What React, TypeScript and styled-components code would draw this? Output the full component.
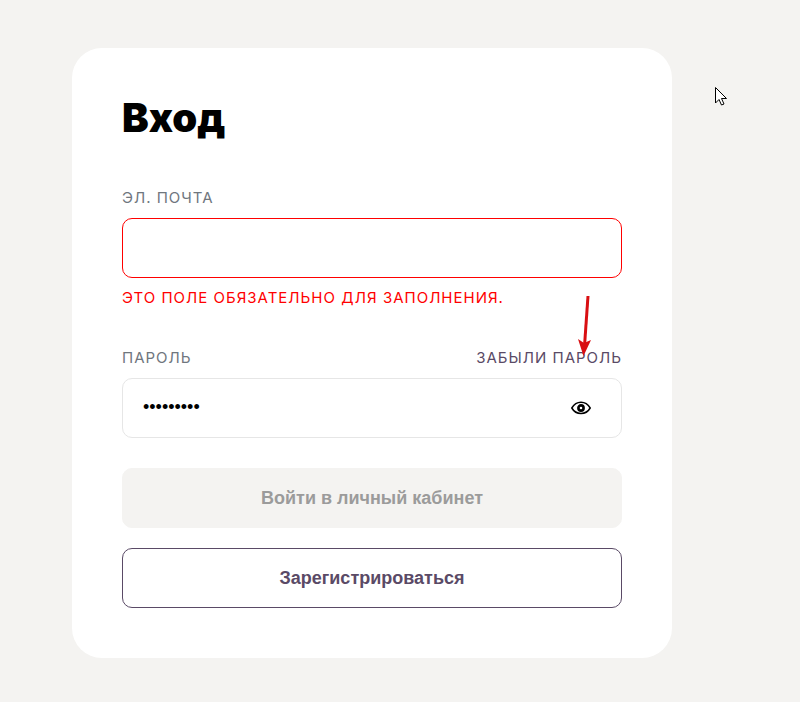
import React, { useState } from 'react';
import styled, { createGlobalStyle } from 'styled-components';

const GlobalStyle = createGlobalStyle`
  * { box-sizing: border-box; }
  body { margin: 0; background: #f4f3f1; font-family: Inter, "Liberation Sans", sans-serif; }
`;

const Page = styled.main`
  position: relative;
  min-height: 100vh;
  padding: 48px 128px 44px 72px;
  background: #f4f3f1;
`;

const Card = styled.form`
  display: flex;
  flex-direction: column;
  max-width: 600px;
  padding: 50px;
  border-radius: 30px;
  background: #fff;
`;

const Title = styled.h1`
  margin: 0 0 50px;
  font: 900 40px/40px Inter, sans-serif;
  color: #000;
`;

const Field = styled.div`
  display: flex;
  flex-direction: column;
`;

const LabelRow = styled.div`
  display: flex;
  justify-content: space-between;
  margin-bottom: 10px;
  font-size: 15px;
  line-height: 20px;
  letter-spacing: 1px;
`;

const Label = styled.label`
  color: #6f767e;
  text-transform: uppercase;
`;

const ForgotLink = styled.a`
  position: relative;
  color: #5a4a66;
  text-decoration: none;
  text-transform: uppercase;
`;

const InputBox = styled.div<{ $invalid?: boolean }>`
  display: flex;
  align-items: center;
  height: 60px;
  padding: 0 20px;
  border: 1px solid ${(p) => (p.$invalid ? '#f00' : '#e6e6e6')};
  border-radius: 10px;
  background: #fff;
`;

const Input = styled.input`
  flex: 1;
  min-width: 0;
  height: 40px;
  padding: 0 0 2px;
  border: 0;
  outline: 0;
  background: transparent;
  font: 18px/24px "Liberation Sans", sans-serif;
  color: #000;
`;

const ErrorText = styled.p`
  margin: 10px 0 40px;
  font-size: 15px;
  line-height: 20px;
  letter-spacing: 1px;
  color: #f00;
  text-transform: uppercase;
`;

const EyeButton = styled.button`
  display: flex;
  margin-right: 10px;
  padding: 0;
  border: 0;
  background: none;
  cursor: pointer;
`;

const Button = styled.button<{ $outline?: boolean }>`
  height: 60px;
  margin-top: ${(p) => (p.$outline ? 20 : 30)}px;
  border: 1px solid ${(p) => (p.$outline ? '#5a4a66' : '#f4f3f1')};
  border-radius: 10px;
  background: ${(p) => (p.$outline ? '#fff' : '#f4f3f1')};
  color: ${(p) => (p.$outline ? '#5a4a66' : '#9b9b9b')};
  font: bold 18px/24px "Liberation Sans", sans-serif;
`;

const Arrow = styled.svg`
  position: absolute;
  right: 30px;
  bottom: 10px;
  pointer-events: none;
`;

const Cursor = styled.svg`
  position: absolute;
  top: 86px;
  left: 714px;
  pointer-events: none;
`;

export default function App() {
  const [email, setEmail] = useState('');
  const [password, setPassword] = useState('password1');
  const [visible, setVisible] = useState(false);

  return (
    <Page>
      <GlobalStyle />
      <Card onSubmit={(e) => e.preventDefault()} noValidate>
        <Title>Вход</Title>
        <Field>
          <LabelRow><Label htmlFor="email">Эл. почта</Label></LabelRow>
          <InputBox $invalid>
            <Input id="email" type="email" value={email} onChange={(e) => setEmail(e.target.value)} aria-invalid="true" aria-describedby="email-error" />
          </InputBox>
          <ErrorText id="email-error">Это поле обязательно для заполнения.</ErrorText>
        </Field>
        <Field>
          <LabelRow>
            <Label htmlFor="password">Пароль</Label>
            <ForgotLink href="#reset">
              Забыли пароль
              <Arrow width="14" height="62" viewBox="0 0 14 62" aria-hidden="true">
                <path d="M10 0 6.500 50" stroke="#d90f12" strokeWidth="3" fill="none" />
                <path d="M0 43 6 47 13 44 5.500 60Z" fill="#d90f12" />
              </Arrow>
            </ForgotLink>
          </LabelRow>
          <InputBox>
            <Input id="password" type={visible ? 'text' : 'password'} value={password} onChange={(e) => setPassword(e.target.value)} />
            <EyeButton type="button" aria-label="Показать пароль" onClick={() => setVisible(!visible)}>
              <svg width="20" height="14" viewBox="0 0 20 14" fill="none" stroke="#000">
                <path d="M.8 7C3 3.200 6.200 1.200 10 1.200S17 3.200 19.200 7c-2.200 3.800-5.400 5.500-9.200 5.500S3 10.800 .8 7Z" strokeWidth="1.500" />
                <circle cx="10" cy="7" r="2.600" strokeWidth="2.600" />
              </svg>
            </EyeButton>
          </InputBox>
        </Field>
        <Button type="submit" disabled>Войти в личный кабинет</Button>
        <Button type="button" $outline>Зарегистрироваться</Button>
      </Card>
      <Cursor width="14" height="21" viewBox="0 0 14 21" aria-hidden="true">
        <path d="M1.500 1.500v15.500l3.500-3.500 2.500 5.500 2.500-1-2.500-5.500h5Z" fill="#fff" stroke="#000" />
      </Cursor>
    </Page>
  );
}
